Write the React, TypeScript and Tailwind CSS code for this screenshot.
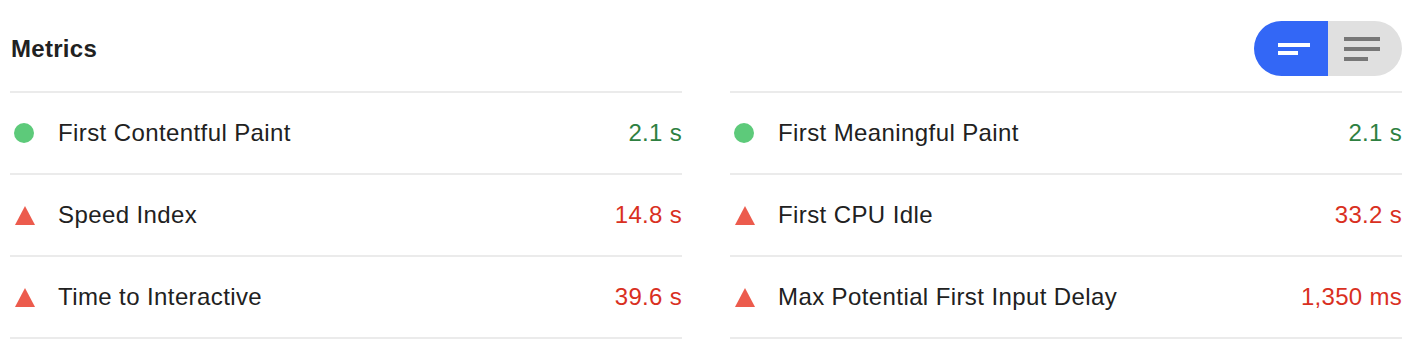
const metrics = [
  { label: "First Contentful Paint", value: "2.1 s", pass: true },
  { label: "First Meaningful Paint", value: "2.1 s", pass: true },
  { label: "Speed Index", value: "14.8 s", pass: false },
  { label: "First CPU Idle", value: "33.2 s", pass: false },
  { label: "Time to Interactive", value: "39.6 s", pass: false },
  { label: "Max Potential First Input Delay", value: "1,350 ms", pass: false },
];

function Icon({ pass }: { pass: boolean }) {
  return (
    <span className="flex w-6 shrink-0 justify-end">
      {pass ? (
        <span className="block h-5 w-5 rounded-full bg-[#5dca7a]" />
      ) : (
        <svg width="20" height="19" viewBox="0 0 20 19" className="mr-[-1px]">
          <polygon points="10,0 20,19 0,19" fill="#ec5b4d" />
        </svg>
      )}
    </span>
  );
}

export default function App() {
  return (
    <main
      className="w-[1428px] bg-white pl-[10px] pr-[26px] text-[#212121]"
      style={{ fontFamily: '"Liberation Sans", Arial, sans-serif' }}
    >
      {/* HEADER */}
      <div className="flex h-[91px] items-center justify-between pt-[6px]">
        <h2 className="ml-px text-[24px] font-bold leading-none tracking-[0.3px]">Metrics</h2>

        <div className="flex h-[55px] w-[148px] overflow-hidden rounded-full">
          <button className="flex w-[74px] flex-col items-start justify-center gap-1 bg-[#3367f6] pl-6">
            <span className="block h-1 w-8 bg-white" />
            <span className="block h-1 w-5 bg-white" />
          </button>
          <button className="flex w-[74px] flex-col items-start justify-center gap-1.5 bg-[#e0e0e0] pl-4">
            <span className="block h-1 w-9 bg-[#777777]" />
            <span className="block h-1 w-9 bg-[#777777]" />
            <span className="block h-1 w-6 bg-[#777777]" />
          </button>
        </div>
      </div>

      {/* METRICS */}
      <div className="grid grid-cols-2 gap-x-12">
        {metrics.map((m, i) => (
          <div
            key={m.label}
            className={`flex items-center border-t-2 border-[#ebebeb] ${i >= 4 ? "h-[84px] border-b-2" : "h-[82px]"}`}
          >
            <Icon pass={m.pass} />
            <span className="ml-6 flex-1 text-[24px] leading-none tracking-[0.4px]">{m.label}</span>
            <span
              className={`text-[24px] leading-none tracking-[0.3px] ${m.pass ? "text-[#2e8041]" : "text-[#d9301f]"}`}
            >
              {m.value}
            </span>
          </div>
        ))}
      </div>
    </main>
  );
}
